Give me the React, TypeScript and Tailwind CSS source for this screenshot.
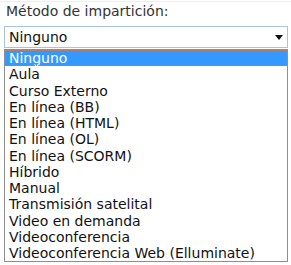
import React from "react";

const items = [
  "Aula",
  "Curso Externo",
  "En línea (BB)",
  "En línea (HTML)",
  "En línea (OL)",
  "En línea (SCORM)",
  "Híbrido",
  "Manual",
  "Transmisión satelital",
  "Video en demanda",
  "Videoconferencia",
  "Videoconferencia Web (Elluminate)",
];

export default function App() {
  return (
    <div
      className="w-[291px] h-[265px] bg-white overflow-hidden"
      style={{ fontFamily: '"DejaVu Sans", Verdana, sans-serif' }}
    >
      <div className="h-px mt-px bg-[#eeeeee]" />
      <div className="pl-[6px] pt-[1px] text-[14px] leading-[16px] text-[#333333]">
        Método de impartición:
      </div>
      <div className="ml-[4px] mt-[7px] w-[284px] h-[22px] border border-[#a9c4de] bg-white flex items-center justify-between pl-[4px] pr-[4px]">
        <span className="text-[14px] leading-[16px] text-[#111111]">Ninguno</span>
        <svg width="8" height="5" viewBox="0 0 8 5">
          <polygon points="0,0 8,0 4,5" fill="#111" />
        </svg>
      </div>
      <div className="ml-[4px] mt-[1px] w-[284px] border border-[#8f8f8f] text-[14px] leading-[16.25px] text-[#111111]">
        <div className="bg-[#3399ff] text-white pl-[4px] outline-dotted outline-1 outline-[#b08070] -outline-offset-1">
          Ninguno
        </div>
        {items.map((t) => (
          <div key={t} className="pl-[4px]">
            {t}
          </div>
        ))}
      </div>
    </div>
  );
}
